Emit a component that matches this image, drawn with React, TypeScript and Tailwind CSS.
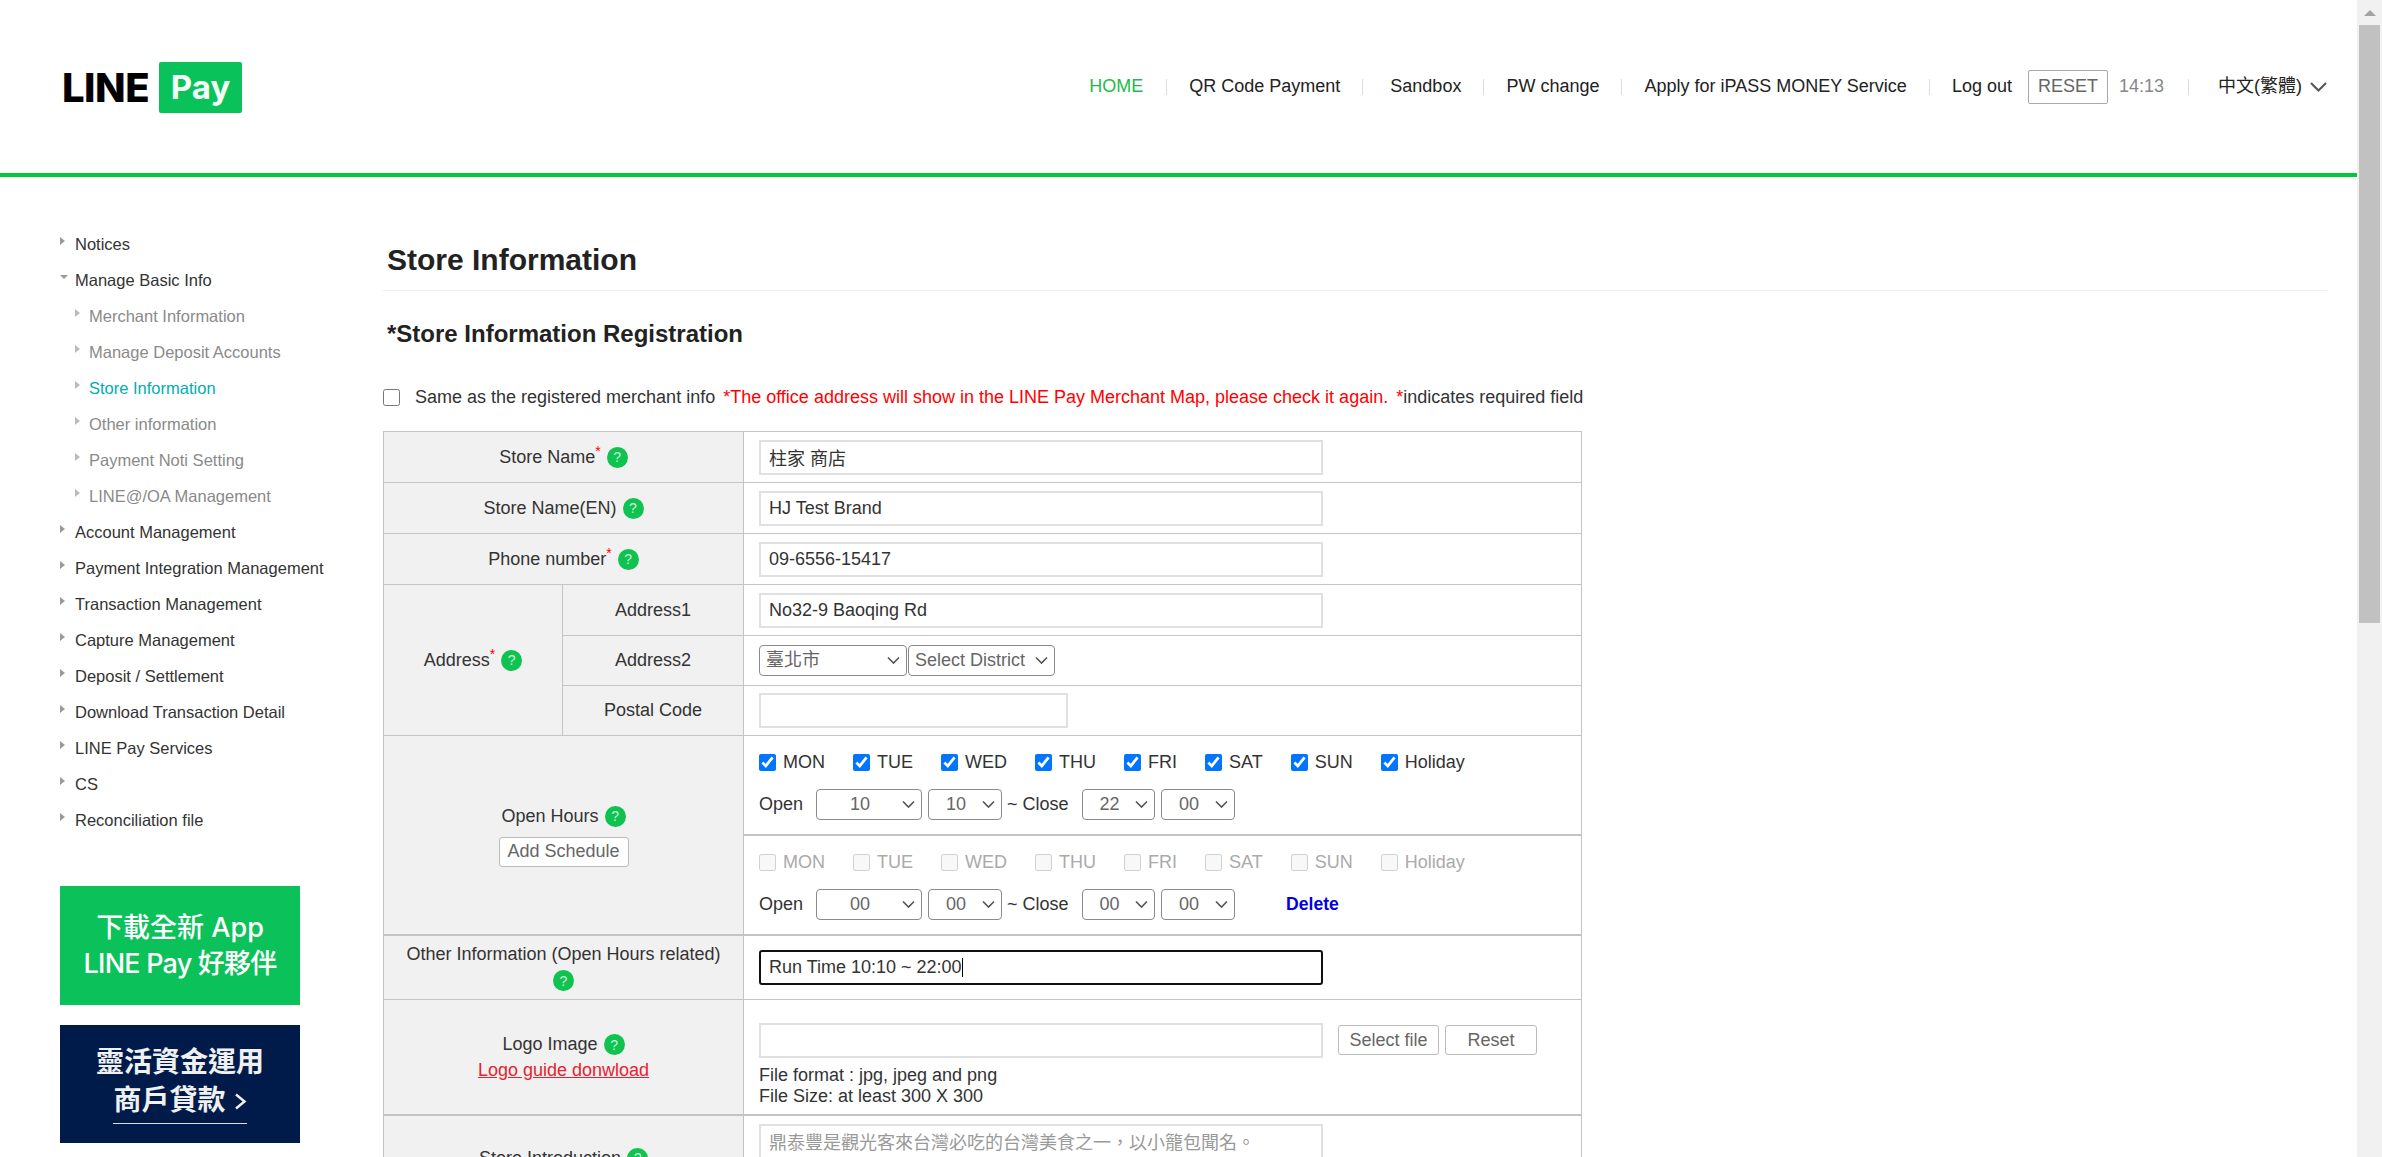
import React from "react";

const topNav = ["QR Code Payment", "Sandbox", "PW change", "Apply for iPASS MONEY Service"];
const days = ["MON", "TUE", "WED", "THU", "FRI", "SAT", "SUN", "Holiday"];

const menu = [
  { label: "Notices" },
  { label: "Manage Basic Info", open: true },
  { label: "Merchant Information", sub: true },
  { label: "Manage Deposit Accounts", sub: true },
  { label: "Store Information", sub: true, active: true },
  { label: "Other information", sub: true },
  { label: "Payment Noti Setting", sub: true },
  { label: "LINE@/OA Management", sub: true },
  { label: "Account Management" },
  { label: "Payment Integration Management" },
  { label: "Transaction Management" },
  { label: "Capture Management" },
  { label: "Deposit / Settlement" },
  { label: "Download Transaction Detail" },
  { label: "LINE Pay Services" },
  { label: "CS" },
  { label: "Reconciliation file" },
];

const Help = () => (
  <span className="inline-flex h-[21px] w-[21px] items-center justify-center rounded-full bg-[#10c24f] align-middle text-[14px] leading-none text-[#c9f2d6]">
    ?
  </span>
);

const Req = () => <sup className="text-[14px] text-[#f00]">*</sup>;

const Label = ({ text, req }: { text: string; req?: boolean }) => (
  <span className="inline-flex h-[24px] items-center gap-[6px]">
    <span>
      {text}
      {req && <Req />}
    </span>
    <Help />
  </span>
);

const TextInput = ({ value, w = "w-[564px]" }: { value?: string; w?: string }) => (
  <input
    readOnly
    value={value ?? ""}
    className={`${w} h-[35px] border-2 border-[#e0e0e0] px-[8px] text-[18px] text-[#333] outline-none`}
  />
);

const Select = ({ value, w, align = "center" }: { value: string; w: string; align?: string }) => (
  <div className={`relative ${w}`}>
    <select
      value={value}
      onChange={() => {}}
      className={`h-[31px] w-full appearance-none rounded-[4px] border border-[#8a8a8a] bg-white text-[18px] text-[#666] ${
        align === "center" ? "pr-[18px] [text-align-last:center]" : "pl-[6px]"
      }`}
    >
      <option>{value}</option>
    </select>
    <svg
      className="pointer-events-none absolute right-[7px] top-[11px]"
      width="13"
      height="9"
      viewBox="0 0 13 9"
      fill="none"
      stroke="#555"
      strokeWidth="1.6"
    >
      <path d="M1 1.5l5.5 5.5L12 1.5" />
    </svg>
  </div>
);

const Days = ({ on }: { on: boolean }) => (
  <div className={`flex items-center gap-[28px] ${on ? "text-[#333]" : "text-[#aaa]"}`}>
    {days.map((d) => (
      <label key={d} className="flex items-center gap-[7px]">
        <input
          type="checkbox"
          checked={on}
          disabled={!on}
          readOnly
          className="h-[17px] w-[17px] accent-[#0075ff]"
        />
        {d}
      </label>
    ))}
  </div>
);

const Hours = ({ a, b, c, d, del }: { a: string; b: string; c: string; d: string; del?: boolean }) => (
  <div className="mt-[13px] flex items-center text-[18px] text-[#333]">
    <span className="w-[57px]">Open</span>
    <Select value={a} w="w-[106px]" />
    <span className="w-[6px]" />
    <Select value={b} w="w-[74px]" />
    <span className="ml-[5px] w-[75px]">~ Close</span>
    <Select value={c} w="w-[73px]" />
    <span className="w-[6px]" />
    <Select value={d} w="w-[74px]" />
    {del && <span className="ml-[51px] text-[17.6px] font-bold text-[#0000e6]">Delete</span>}
  </div>
);

const labelCell = "border border-[#c4c4c4] bg-[#f1f1f1] text-center align-middle";
const valueCell = "border border-[#c4c4c4] pl-[15px] align-middle";

export default function App() {
  return (
    <div className="flex h-screen w-full overflow-hidden bg-white font-['Liberation_Sans','Noto_Sans_CJK_TC',sans-serif] text-[#333]">
      <div className="w-[2357px] shrink-0">
        <header className="flex h-[177px] items-center justify-between border-b-4 border-[#00c73c] pl-[62px] pr-[30px]">
          <div className="mt-[2px] flex items-center gap-[10px] font-['Inter',sans-serif]">
            <span className="text-[40px] font-extrabold leading-none tracking-[-0.5px] text-black">LINE</span>
            <span className="flex h-[51px] w-[83px] items-center justify-center rounded-[2px] bg-[#0ac25a] text-[33px] font-bold text-[#f2fff7]">
              Pay
            </span>
          </div>
          <nav className="flex items-center text-[18px] text-[#222]">
            <span className="flex h-[16px] items-center border-r border-[#ddd] pr-[23px] text-[#1fbb4a]">HOME</span>
            {topNav.map((n) => (
              <span
                key={n}
                className={`flex h-[16px] items-center border-r border-[#ddd] pr-[22px] ${
                  n === "Sandbox" ? "pl-[27px]" : "pl-[22px]"
                }`}
              >
                {n}
              </span>
            ))}
            <span className="pl-[22px]">Log out</span>
            <span className="ml-[16px] flex h-[34px] w-[80px] items-center justify-center rounded-[2px] border border-[#aaa] text-[#666]">
              RESET
            </span>
            <span className="flex h-[16px] items-center border-r border-[#ddd] pl-[11px] pr-[24px] text-[#888]">14:13</span>
            <span className="pl-[29px]">中文(繁體)</span>
            <svg className="ml-[8px]" width="17" height="10" viewBox="0 0 17 10" fill="none" stroke="#555" strokeWidth="2">
              <path d="M1 1l7.5 7.5L16 1" />
            </svg>
          </nav>
        </header>

        <div className="flex">
          <aside className="w-[383px] shrink-0 pl-[60px] pt-[49px]">
            <ul className="text-[16.5px]">
              {menu.map((m) => (
                <li
                  key={m.label}
                  className={`flex h-[36px] items-center ${m.sub ? "pl-[15px]" : ""} ${
                    m.active ? "text-[#00aeb0]" : m.sub ? "text-[#8a8a8a]" : "text-[#333]"
                  }`}
                >
                  {m.open ? (
                    <span className="mr-[7px] -mt-[6px] h-0 w-0 border-x-[4px] border-t-[4px] border-x-transparent border-t-[#999]" />
                  ) : (
                    <span
                      className={`-mt-[6px] h-0 w-0 border-y-[4.5px] border-l-[5px] border-y-transparent ${
                        m.sub ? "mr-[9px] border-l-[#bbb]" : "mr-[10px] border-l-[#999]"
                      }`}
                    />
                  )}
                  {m.label}
                </li>
              ))}
            </ul>
            <div className="mt-[48px] flex h-[119px] w-[240px] flex-col items-center justify-center bg-[#0bc25a] font-['Inter','Noto_Sans_CJK_TC',sans-serif] text-[27px] font-medium leading-[36px] text-white">
              <span>下載全新 App</span>
              <span className="tracking-[-0.8px]">LINE Pay 好夥伴</span>
            </div>
            <div className="mt-[20px] flex h-[118px] w-[240px] flex-col items-center justify-center bg-[#001b4a] text-[28px] font-bold leading-[38px] text-[#f0f0f0]">
              <span>靈活資金運用</span>
              <span className="flex items-center gap-[8px] border-b border-[#ddd] pb-[3px]">
                商戶貸款
                <svg width="13" height="17" viewBox="0 0 13 17" fill="none" stroke="#f0f0f0" strokeWidth="2.4">
                  <path d="M2 1.5l8.5 7-8.5 7" />
                </svg>
              </span>
            </div>
          </aside>

          <main className="w-[1944px]">
            <h1 className="border-b border-[#eee] pb-[12px] pl-[4px] pt-[64px] text-[30px] font-bold leading-[37px] text-[#222]">
              Store Information
            </h1>
            <h2 className="mt-[26px] pl-[4px] text-[24px] font-bold leading-[34px] text-[#222]">
              *Store Information Registration
            </h2>
            <div className="mt-[32px] flex h-[28px] items-center text-[18px]">
              <input type="checkbox" className="h-[17px] w-[17px]" readOnly />
              <span className="ml-[15px]">Same as the registered merchant info</span>
              <span className="ml-[8px] text-[#f00]">*The office address will show in the LINE Pay Merchant Map, please check it again.</span>
              <span className="ml-[8px]">
                <span className="text-[#f00]">*</span>indicates required field
              </span>
            </div>

            <table className="mt-[20px] w-[1199px] table-fixed border-collapse text-[18px]">
              <colgroup>
                <col className="w-[179px]" />
                <col className="w-[181px]" />
                <col />
              </colgroup>
              <tbody>
                <tr className="h-[51px]">
                  <td colSpan={2} className={labelCell}>
                    <Label text="Store Name" req />
                  </td>
                  <td className={valueCell}>
                    <TextInput value="柱家 商店" />
                  </td>
                </tr>
                <tr className="h-[51px]">
                  <td colSpan={2} className={labelCell}>
                    <Label text="Store Name(EN)" />
                  </td>
                  <td className={valueCell}>
                    <TextInput value="HJ Test Brand" />
                  </td>
                </tr>
                <tr className="h-[51px]">
                  <td colSpan={2} className={labelCell}>
                    <Label text="Phone number" req />
                  </td>
                  <td className={valueCell}>
                    <TextInput value="09-6556-15417" />
                  </td>
                </tr>
                <tr className="h-[51px]">
                  <td rowSpan={3} className={labelCell}>
                    <Label text="Address" req />
                  </td>
                  <td className={labelCell}>Address1</td>
                  <td className={valueCell}>
                    <TextInput value="No32-9 Baoqing Rd" />
                  </td>
                </tr>
                <tr className="h-[50px]">
                  <td className={labelCell}>Address2</td>
                  <td className={valueCell}>
                    <div className="flex">
                      <Select value="臺北市" w="w-[148px]" align="left" />
                      <span className="w-px" />
                      <Select value="Select District" w="w-[147px]" align="left" />
                    </div>
                  </td>
                </tr>
                <tr className="h-[50px]">
                  <td className={labelCell}>Postal Code</td>
                  <td className={valueCell}>
                    <TextInput w="w-[309px]" />
                  </td>
                </tr>
                <tr className="h-[99px]">
                  <td colSpan={2} rowSpan={2} className={`${labelCell} border-b-2`}>
                    <Label text="Open Hours" />
                    <div className="mt-[7px]">
                      <button className="h-[30px] w-[130px] rounded-[3px] border border-[#bbb] bg-white text-[18px] text-[#666]">
                        Add Schedule
                      </button>
                    </div>
                  </td>
                  <td className={`${valueCell} border-b-2`}>
                    <Days on />
                    <Hours a="10" b="10" c="22" d="00" />
                  </td>
                </tr>
                <tr className="h-[100px]">
                  <td className={`${valueCell} border-b-2`}>
                    <Days on={false} />
                    <Hours a="00" b="00" c="00" d="00" del />
                  </td>
                </tr>
                <tr className="h-[65px]">
                  <td colSpan={2} className={`${labelCell} leading-[25px]`}>
                    Other Information (Open Hours related)
                    <div>
                      <Help />
                    </div>
                  </td>
                  <td className={valueCell}>
                    <div className="flex h-[35px] w-[564px] items-center rounded-[3px] border-2 border-[#111] px-[8px] text-[18px] text-[#333]">
                      Run Time 10:10 ~ 22:00
                      <span className="h-[19px] w-px bg-black" />
                    </div>
                  </td>
                </tr>
                <tr className="h-[115px]">
                  <td colSpan={2} className={`${labelCell} border-b-2`}>
                    <Label text="Logo Image" />
                    <div className="leading-[24px]">
                      <span className="text-[#e8212f] underline">Logo guide donwload</span>
                    </div>
                  </td>
                  <td className={`${valueCell} border-b-2 pt-[16px]`}>
                    <div className="flex items-center">
                      <TextInput />
                      <button className="ml-[15px] h-[30px] w-[101px] rounded-[3px] border border-[#bbb] bg-white text-[18px] text-[#666]">
                        Select file
                      </button>
                      <button className="ml-[6px] h-[30px] w-[92px] rounded-[3px] border border-[#bbb] bg-white text-[18px] text-[#666]">
                        Reset
                      </button>
                    </div>
                    <div className="mt-[7px] text-[18px] leading-[21px]">
                      File format : jpg, jpeg and png
                      <br />
                      File Size: at least 300 X 300
                    </div>
                  </td>
                </tr>
                <tr className="h-[87px]">
                  <td colSpan={2} className={labelCell}>
                    <Label text="Store Introduction" />
                  </td>
                  <td className={valueCell}>
                    <textarea
                      readOnly
                      placeholder="鼎泰豐是觀光客來台灣必吃的台灣美食之一，以小籠包聞名。"
                      className="block h-[69px] w-[564px] resize-none border-2 border-[#e0e0e0] px-[8px] py-[4px] text-[18px] outline-none placeholder:text-[#999]"
                    />
                  </td>
                </tr>
              </tbody>
            </table>
          </main>
        </div>
      </div>

      <div className="w-[25px] shrink-0 bg-[#f1f1f1]">
        <div className="flex h-[25px] justify-center pt-[10px]">
          <span className="h-0 w-0 border-x-[6px] border-b-[6px] border-x-transparent border-b-[#a3a3a3]" />
        </div>
        <div className="mx-[2px] h-[598px] bg-[#c1c1c1]" />
      </div>
    </div>
  );
}
